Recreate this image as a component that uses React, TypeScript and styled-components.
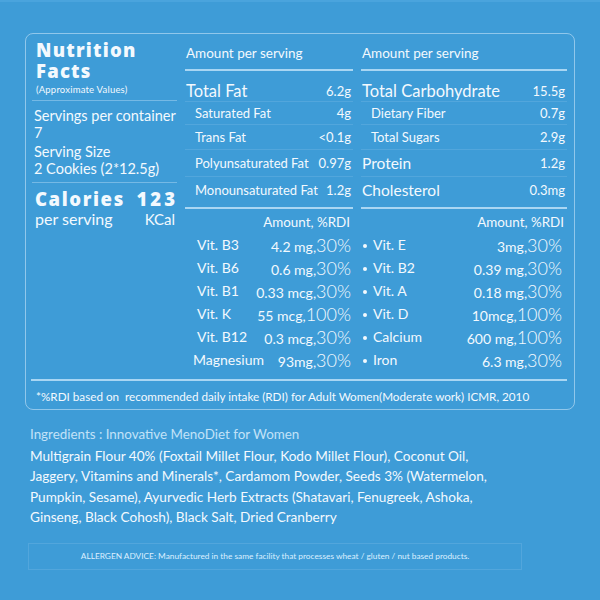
import React from 'react';
import styled, { createGlobalStyle } from 'styled-components';

const Global = createGlobalStyle`
  html, body { margin: 0; padding: 0; background: #3e9cd7; }
  body { font-family: Lato, "Open Sans", sans-serif; color: #f3f9fe; }
  * { box-sizing: border-box; }
`;

const Page = styled.div`
  width: 600px;
  height: 600px;
  background: #3e9cd7;
  border-top: 2px solid #4aa4dd;
  padding-top: 31px;
  overflow: hidden;
`;

const Panel = styled.section`
  margin: 0 25px 0 25px;
  height: 377px;
  border: 1px solid rgba(225, 242, 255, 0.5);
  border-radius: 8px;
  display: flex;
  flex-direction: column;
`;

const Top = styled.div`
  display: grid;
  grid-template-columns: 155px 176px 1fr;
  height: 345px;
`;

const LeftCol = styled.div`
  padding: 5px 4px 0 6px;
  display: flex;
  flex-direction: column;
`;

const Heavy = `
  font-family: "Open Sans", Lato, sans-serif;
  font-weight: 800;
`;

const Title = styled.h1`
  ${Heavy}
  margin: 0 0 0 4px;
  font-size: 18.5px;
  line-height: 21px;
  letter-spacing: 1.2px;
`;

const Approx = styled.div`
  margin: 4px 0 0 4px;
  font-size: 9.5px;
  line-height: 10px;
  letter-spacing: 0.2px;
`;

const Rule = styled.div<{ $strong?: boolean }>`
  height: ${p => (p.$strong ? 2 : 1)}px;
  background: ${p => (p.$strong ? '#a9d6f3' : 'rgba(220, 240, 255, 0.35)')};
  flex-shrink: 0;
`;

const LeftRule = styled(Rule)`
  margin-top: 5px;
`;

const InfoBlock = styled.div<{ $mt: number }>`
  margin: ${p => p.$mt}px 0 0 2px;
  font-size: 14.5px;
  line-height: 17px;
`;

const CalRow = styled.div`
  ${Heavy}
  margin: 5px 0 0 3px;
  display: flex;
  justify-content: space-between;
  font-size: 18.5px;
  line-height: 22px;
  letter-spacing: 1.6px;
`;

const CalNum = styled.span`
  letter-spacing: 3px;
  margin-right: -1px;
`;

const PerRow = styled.div`
  margin: 0 0 0 3px;
  display: flex;
  justify-content: space-between;
  align-items: baseline;
  font-size: 16px;
  line-height: 17px;
`;

const KCal = styled.span`
  font-size: 15px;
  margin-right: 2px;
`;

const DataCol = styled.div<{ $pl: number; $pr: number }>`
  padding: 0 ${p => p.$pr}px 0 ${p => p.$pl}px;
  display: flex;
  flex-direction: column;
`;

const ColHead = styled.div`
  height: 35px;
  padding: 12px 0 0 1px;
  font-size: 13.5px;
  line-height: 14px;
`;

const MacroRow = styled.div<{ $h: number; $pt?: number; $pb?: number; $last?: boolean }>`
  height: ${p => p.$h}px;
  padding-top: ${p => p.$pt || 0}px;
  padding-bottom: ${p => p.$pb || 0}px;
  padding-right: 2px;
  display: flex;
  justify-content: space-between;
  align-items: center;
  border-bottom: ${p => (p.$last ? 'none' : '1px solid rgba(220, 240, 255, 0.13)')};
`;

const MacroName = styled.span<{ $sub?: boolean; $big?: boolean }>`
  font-size: ${p => (p.$big ? 16.5 : p.$sub ? 13 : 15.5)}px;
  padding-left: ${p => (p.$sub ? 10 : 1)}px;
`;

const MacroVal = styled.span`
  font-size: 13px;
`;

const RdiHead = styled.div`
  height: 24px;
  padding: 6px 3px 0 0;
  text-align: right;
  font-size: 13.4px;
  line-height: 14px;
`;

const VitRow = styled.div<{ $pl: number; $pr: number }>`
  height: 23px;
  display: flex;
  align-items: center;
  justify-content: space-between;
  padding: 0 ${p => p.$pr}px 0 ${p => p.$pl}px;
`;

const VitName = styled.span<{ $dot?: boolean }>`
  position: relative;
  font-size: 14px;
  padding-left: ${p => (p.$dot ? 10 : 0)}px;
  &::before {
    content: '';
    display: ${p => (p.$dot ? 'block' : 'none')};
    position: absolute;
    left: 0;
    top: 50%;
    width: 4px;
    height: 4px;
    margin-top: -1px;
    border-radius: 50%;
    background: #f3f9fe;
  }
`;

const VitVal = styled.span`
  font-size: 14px;
  white-space: pre;
`;

const Pct = styled.span`
  font-size: 18px;
  font-weight: 300;
`;

const FullRule = styled(Rule)`
  margin: 0 7px 0 5px;
`;

const Footnote = styled.div`
  flex: 1;
  display: flex;
  align-items: center;
  padding: 1px 0 0 10px;
  font-size: 11.7px;
  white-space: pre;
`;

const Ingredients = styled.div`
  padding: 16px 0 0 30px;
`;

const IngHead = styled.div`
  font-size: 13.4px;
  line-height: 17px;
  color: #c2e2f7;
`;

const IngBody = styled.div`
  margin-top: 3px;
  font-size: 13.6px;
  line-height: 20.4px;
`;

const IngLine = styled.span`
  display: block;
  white-space: nowrap;
`;

const Allergen = styled.div`
  margin: 15px 78px 0 28px;
  height: 27px;
  border: 1px solid rgba(220, 240, 255, 0.13);
  display: flex;
  align-items: center;
  justify-content: center;
  font-size: 8.3px;
  color: #dcefff;
`;

type Macro = [string, string, number, boolean, number, number];

const macroLeft: Macro[] = [
  ['Total Fat', '6.2g', 31, false, 9, 0],
  ['Saturated Fat', '4g', 23, true, 0, 0],
  ['Trans Fat', '<0.1g', 25, true, 0, 0],
  ['Polyunsaturated Fat', '0.97g', 27, true, 0, 0],
  ['Monounsaturated Fat', '1.2g', 30, true, 0, 4],
];

const macroRight: Macro[] = [
  ['Total Carbohydrate', '15.5g', 31, false, 9, 0],
  ['Dietary Fiber', '0.7g', 23, true, 0, 0],
  ['Total Sugars', '2.9g', 25, true, 0, 0],
  ['Protein', '1.2g', 27, false, 0, 0],
  ['Cholesterol', '0.3mg', 30, false, 0, 4],
];

const vitLeft: [string, string, string][] = [
  ['Vit. B3', '4.2 mg,', '30%'],
  ['Vit. B6', '0.6 mg,', '30%'],
  ['Vit. B1', '0.33 mcg,', '30%'],
  ['Vit. K', '55 mcg,', '100%'],
  ['Vit. B12', '0.3 mcg,', '30%'],
  ['Magnesium', '93mg,', '30%'],
];

const vitRight: [string, string, string][] = [
  ['Vit. E', '3mg,', '30%'],
  ['Vit. B2', '0.39 mg,', '30%'],
  ['Vit. A', '0.18 mg,', '30%'],
  ['Vit. D', '10mcg,', '100%'],
  ['Calcium', '600 mg,', '100%'],
  ['Iron', '6.3 mg,', '30%'],
];

function Macros({ rows }: { rows: Macro[] }) {
  return (
    <>
      {rows.map(([n, v, h, sub, pt, pb], i) => (
        <MacroRow key={n} $h={h} $pt={pt} $pb={pb} $last={i === rows.length - 1}>
          <MacroName $sub={sub} $big={i === 0}>{n}</MacroName>
          <MacroVal>{v}</MacroVal>
        </MacroRow>
      ))}
    </>
  );
}

export default function App() {
  return (
    <Page>
      <Global />
      <Panel>
        <Top>
          <LeftCol>
            <Title>Nutrition<br />Facts</Title>
            <Approx>(Approximate Values)</Approx>
            <LeftRule />
            <InfoBlock $mt={6}>Servings per container<br />7</InfoBlock>
            <InfoBlock $mt={2}>Serving Size<br />2 Cookies (2*12.5g)</InfoBlock>
            <LeftRule />
            <CalRow><span>Calories</span><CalNum>123</CalNum></CalRow>
            <PerRow><span>per serving</span><KCal>KCal</KCal></PerRow>
          </LeftCol>
          <DataCol $pl={4} $pr={4}>
            <ColHead>Amount per serving</ColHead>
            <Rule $strong />
            <Macros rows={macroLeft} />
            <Rule $strong />
            <RdiHead>Amount, %RDI</RdiHead>
            {vitLeft.map(([n, a, p]) => (
              <VitRow key={n} $pl={n === 'Magnesium' ? 8 : 12} $pr={2}>
                <VitName>{n}</VitName>
                <VitVal>{a}<Pct>{p}</Pct></VitVal>
              </VitRow>
            ))}
          </DataCol>
          <DataCol $pl={4} $pr={7}>
            <ColHead>Amount per serving</ColHead>
            <Rule $strong />
            <Macros rows={macroRight} />
            <Rule $strong />
            <RdiHead>Amount, %RDI</RdiHead>
            {vitRight.map(([n, a, p]) => (
              <VitRow key={n} $pl={2} $pr={5}>
                <VitName $dot>{n}</VitName>
                <VitVal>{a}<Pct>{p}</Pct></VitVal>
              </VitRow>
            ))}
          </DataCol>
        </Top>
        <FullRule $strong />
        <Footnote>*%RDI based on  recommended daily intake (RDI) for Adult Women(Moderate work) ICMR, 2010</Footnote>
      </Panel>
      <Ingredients>
        <IngHead>Ingredients : Innovative MenoDiet for Women</IngHead>
        <IngBody>
          <IngLine>Multigrain Flour 40% (Foxtail Millet Flour, Kodo Millet Flour), Coconut Oil,</IngLine>
          <IngLine>Jaggery, Vitamins and Minerals*, Cardamom Powder, Seeds 3% (Watermelon,</IngLine>
          <IngLine>Pumpkin, Sesame), Ayurvedic Herb Extracts (Shatavari, Fenugreek, Ashoka,</IngLine>
          <IngLine>Ginseng, Black Cohosh), Black Salt, Dried Cranberry</IngLine>
        </IngBody>
      </Ingredients>
      <Allergen>ALLERGEN ADVICE: Manufactured in the same facility that processes wheat / gluten / nut based products.</Allergen>
    </Page>
  );
}
